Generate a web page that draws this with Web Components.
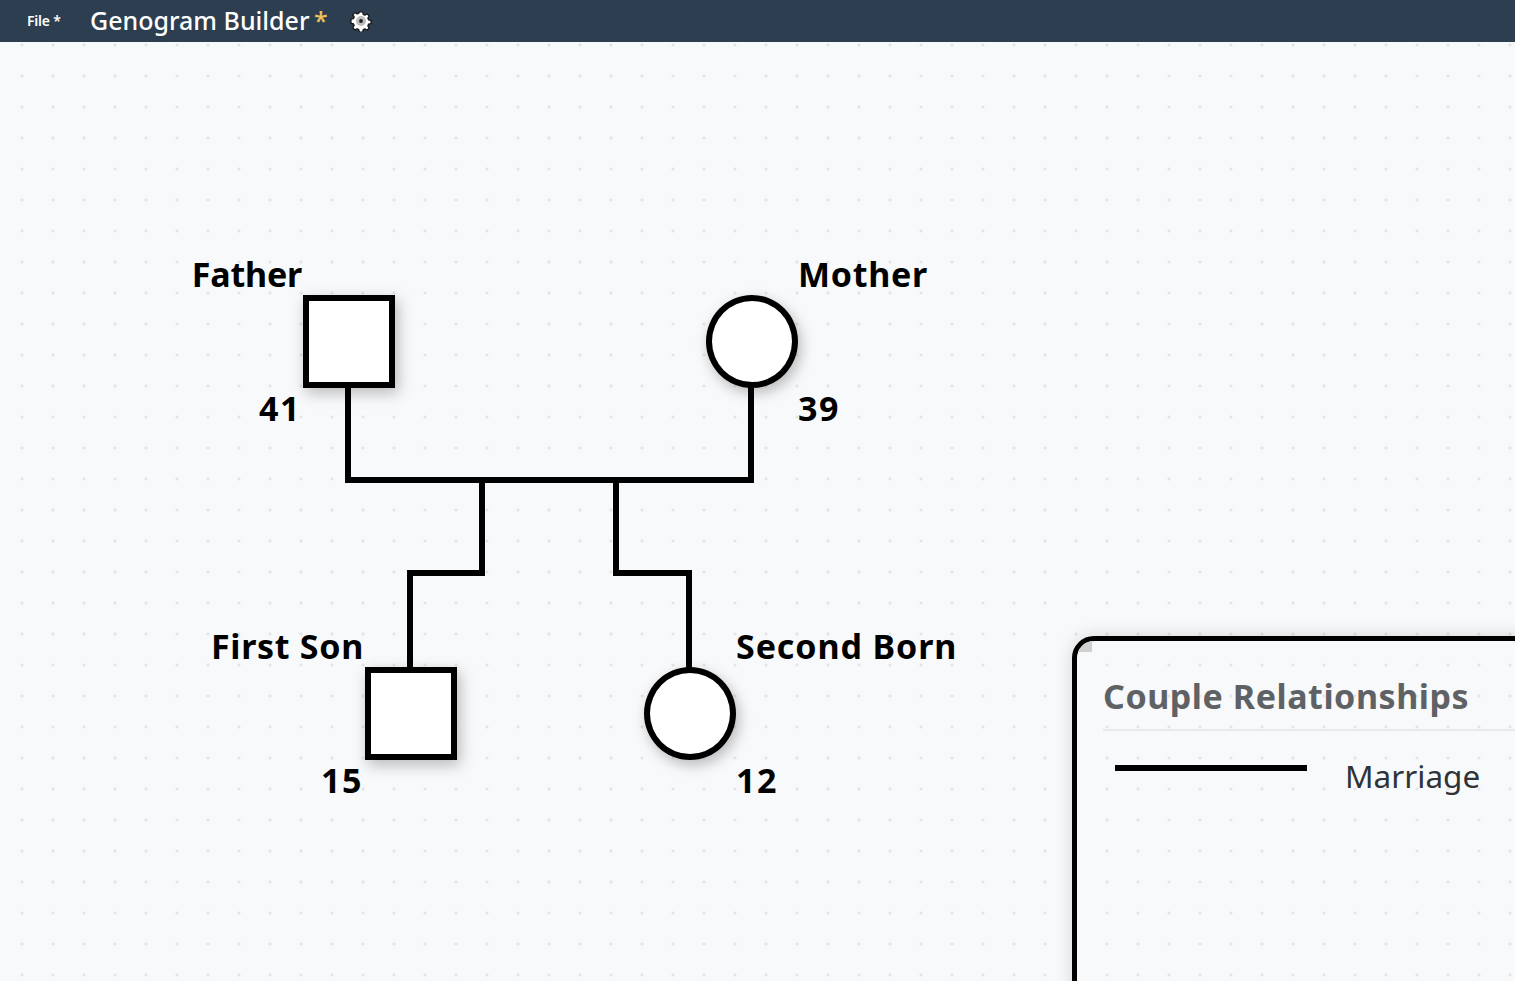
<!DOCTYPE html>
<html>
<head>
<meta charset="utf-8">
<title>Genogram Builder</title>
<style>
  html, body { margin: 0; height: 100%; overflow: hidden; }
  body { font-family: "Noto Sans", "Open Sans", sans-serif; display: flex; flex-direction: column; height: 981px; }
</style>
</head>
<body>
<app-header></app-header>
<geno-canvas>
  <geno-links></geno-links>
  <geno-node shape="square" style="left:303px;top:253px;--label-spacing:-.2px" label="Father" age="41" side="left"></geno-node>
  <geno-node shape="circle" style="left:706px;top:253px" label="Mother" age="39" side="right"></geno-node>
  <geno-node shape="square" style="left:365px;top:625px" label="First Son" age="15" side="left"></geno-node>
  <geno-node shape="circle" style="left:644px;top:625px;--label-spacing:.9px" label="Second Born" age="12" side="right"></geno-node>
  <legend-panel title="Couple Relationships">
    <legend-row label="Marriage"></legend-row>
  </legend-panel>
</geno-canvas>

<script>
class AppHeader extends HTMLElement {
  constructor() {
    super();
    this.attachShadow({ mode: 'open' }).innerHTML = `
<style>
  :host { display: flex; align-items: center; height: 42px; flex: none; background: #2c3e50; color: #fff; }
  .file { margin-left: 27px; font-size: 14px; font-weight: 600; width: 63px; letter-spacing: -0.2px; position: relative; top: -1px; }
  .title { font-size: 25px; font-weight: 500; white-space: nowrap; position: relative; top: -1px; }
  .title span { color: #f0c05a; margin-left: -2px; }
  svg { margin-left: 22px; display: block; }
</style>
<div class="file">File *</div>
<div class="title">Genogram Builder <span>*</span></div>
<svg width="22" height="22" viewBox="0 0 22 22">
  <path fill="#fff" stroke="#111" stroke-width="1.2" stroke-linejoin="round" d="M9.3 2h3.4l.5 2.5 1.7.7 2.1-1.4 2.2 2.2-1.4 2.1.7 1.7 2.5.5v3.4l-2.5.5-.7 1.7 1.4 2.1-2.2 2.2-2.1-1.4-1.7.7-.5 2.5H9.3l-.5-2.5-1.7-.7L5 19.8l-2.2-2.2 1.4-2.1-.7-1.7-2.5-.5V9.1l2.5-.5.7-1.7L2.800 4.800 5 2.600l2.100 1.400 1.700-.7z"/>
  <circle cx="11" cy="11" r="5" fill="#bdbdbd"/>
  <circle cx="11" cy="11" r="1.900" fill="#222"/>
</svg>`;
  }
}

class GenoCanvas extends HTMLElement {
  constructor() {
    super();
    this.attachShadow({ mode: 'open' }).innerHTML = `
<style>
  :host {
    display: block; position: relative; flex: 1; overflow: hidden;
    background-color: #f8f9fb;
    background-image: radial-gradient(circle at center, #dcdee1 0, #dcdee1 1px, transparent 1.500px);
    background-size: 31px 31px;
    background-position: 6.500px -12.500px;
  }
</style>
<slot></slot>`;
  }
}

// lines between the parents and the children
class GenoLinks extends HTMLElement {
  constructor() {
    super();
    this.attachShadow({ mode: 'open' }).innerHTML = `
<style>
  :host { position: absolute; inset: 0; }
  svg { display: block; }
  path { fill: none; stroke: #000; stroke-width: 6; stroke-linejoin: miter; }
</style>
<svg width="1515" height="939">
  <path d="M348 340V438H751V340"/>
  <path d="M482 438V531H410V660"/>
  <path d="M616 438V531H689V660"/>
</svg>`;
  }
}

class GenoNode extends HTMLElement {
  connectedCallback() {
    if (this.shadowRoot) return;
    const right = this.getAttribute('side') === 'right';
    const round = this.getAttribute('shape') === 'circle';
    this.attachShadow({ mode: 'open' }).innerHTML = `
<style>
  :host { position: absolute; display: block; width: 92px; height: 93px; }
  .shape {
    width: 100%; height: 100%; box-sizing: border-box; background: #fff;
    border: 6px solid #000; border-radius: ${round ? '50%' : '0'};
    box-shadow: 3px 5px 14px rgba(0,0,0,.26);
  }
  .text {
    position: absolute; white-space: nowrap; color: #000;
    font-size: 34px; font-weight: 700; line-height: 44px;
  }
  .label { top: -43px; letter-spacing: var(--label-spacing, .7px); ${right ? 'left: 92px;' : 'right: 93px;'} }
  .age { top: 91px; letter-spacing: 1.500px; ${right ? 'left: 92px;' : 'right: 94px;'} }
</style>
<div class="shape"></div>
<div class="text label">${this.getAttribute('label')}</div>
<div class="text age">${this.getAttribute('age')}</div>`;
  }
}

class LegendPanel extends HTMLElement {
  connectedCallback() {
    if (this.shadowRoot) return;
    this.attachShadow({ mode: 'open' }).innerHTML = `
<style>
  :host {
    position: absolute; display: block; left: 1072px; top: 594px; width: 600px; height: 500px;
    box-sizing: border-box; border: 5px solid #000; border-radius: 22px; overflow: hidden;
    padding: 32px 26px; box-shadow: 0 0 18px rgba(0,0,0,.14);
  }
  .corner { position: absolute; left: 0; top: 0; width: 15px; height: 11px; background: #d0d0d0; }
  h2 {
    margin: 0 0 12px; padding-bottom: 10px; font-size: 34px; line-height: 46px; font-weight: 700; color: #5f6265;
    border-bottom: 2px solid #e8e9ea; white-space: nowrap; letter-spacing: .55px;
  }
</style>
<div class="corner"></div>
<h2>${this.getAttribute('title')}</h2>
<slot></slot>`;
  }
}

class LegendRow extends HTMLElement {
  connectedCallback() {
    if (this.shadowRoot) return;
    this.attachShadow({ mode: 'open' }).innerHTML = `
<style>
  :host { display: flex; align-items: flex-start; padding-left: 12px; color: #2e3338; }
  .line { width: 192px; height: 6px; background: #000; margin-top: 22px; flex: none; }
  .name { margin: 12px 0 0 38px; font-size: 31.500px; line-height: 42px; }
</style>
<div class="line"></div>
<div class="name">${this.getAttribute('label')}</div>`;
  }
}

customElements.define('app-header', AppHeader);
customElements.define('geno-canvas', GenoCanvas);
customElements.define('geno-links', GenoLinks);
customElements.define('geno-node', GenoNode);
customElements.define('legend-panel', LegendPanel);
customElements.define('legend-row', LegendRow);
</script>
</body>
</html>
